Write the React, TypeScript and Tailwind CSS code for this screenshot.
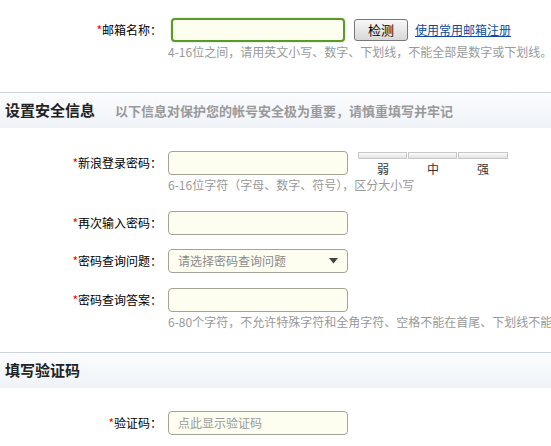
import React from "react";

const font = { fontFamily: '"Noto Sans CJK SC", "Liberation Sans", sans-serif' };

function Label({ text }: { text: string }) {
  return (
    <div className="w-[162px] shrink-0 text-right text-[12px] leading-[14px] text-black">
      <span className="text-[#ff0000]">*</span>
      {text}
    </div>
  );
}

function Input({ placeholder }: { placeholder?: string }) {
  return (
    <div className="ml-[6px] flex h-[24px] w-[180px] items-center rounded-[4px] border border-[#a3a39a] bg-[#fefef0] pl-[9px] text-[12px] text-[#9a9a9a]">
      {placeholder}
    </div>
  );
}

function Hint({ text }: { text: string }) {
  return (
    <div className="ml-[168px] mt-[3px] whitespace-nowrap text-[12px] leading-[14px] text-[#999]">{text}</div>
  );
}

function Header({ title, sub }: { title: string; sub?: string }) {
  return (
    <div className="flex h-[36px] items-center border-t border-[#cdd6de] bg-gradient-to-b from-[#fbfcfe] to-[#eff3f8] pl-[5px]">
      <span className="text-[15px] font-bold text-[#222]">{title}</span>
      {sub && <span className="ml-[20px] text-[13px] font-bold text-[#999]">{sub}</span>}
    </div>
  );
}

export default function App() {
  return (
    <div className="h-[446px] w-[551px] overflow-hidden bg-white" style={font}>
      <div className="flex h-[24px] items-center pt-0 mt-[18px]">
        <Label text="邮箱名称：" />
        <div className="ml-[9px] h-[24px] w-[174px] rounded-[4px] border-2 border-[#5a9a2a] bg-[#fefef0] shadow-[0_0_2px_#b5d99c]" />
        <button className="ml-[9px] flex h-[22px] w-[54px] items-center justify-center rounded-[3px] border border-[#777] bg-gradient-to-b from-[#f8f8f8] to-[#d8d8d8] text-[13px] text-black">
          检测
        </button>
        <a className="ml-[7px] whitespace-nowrap text-[12px] text-[#0d4a9c] underline">使用常用邮箱注册</a>
      </div>
      <Hint text="4-16位之间，请用英文小写、数字、下划线，不能全部是数字或下划线。" />

      <div className="mt-[33px]">
        <Header title="设置安全信息" sub="以下信息对保护您的帐号安全极为重要，请慎重填写并牢记" />
      </div>

      <div className="mt-[23px] flex h-[24px] items-start">
        <div className="flex h-[24px] items-center">
          <Label text="新浪登录密码：" />
          <Input />
        </div>
        <div className="ml-[10px] mt-[1px] flex w-[151px] flex-col">
          <div className="flex gap-[1px]">
            <div className="h-[7px] w-[49px] border border-[#c8c8c8] bg-gradient-to-b from-[#fbfbfb] to-[#e2e2e2]" />
            <div className="h-[7px] w-[49px] border border-[#c8c8c8] bg-gradient-to-b from-[#fbfbfb] to-[#e2e2e2]" />
            <div className="h-[7px] w-[50px] border border-[#c8c8c8] bg-gradient-to-b from-[#fbfbfb] to-[#e2e2e2]" />
          </div>
          <div className="mt-[3px] flex text-[12px] leading-[14px] text-[#333]">
            <span className="w-[50px] text-center">弱</span>
            <span className="w-[50px] text-center">中</span>
            <span className="w-[50px] text-center">强</span>
          </div>
        </div>
      </div>
      <Hint text="6-16位字符（字母、数字、符号），区分大小写" />

      <div className="mt-[19px] flex h-[24px] items-center">
        <Label text="再次输入密码：" />
        <Input />
      </div>

      <div className="mt-[14px] flex h-[24px] items-center">
        <Label text="密码查询问题：" />
        <div className="ml-[6px] flex h-[24px] w-[180px] items-center justify-between rounded-[4px] border border-[#a3a39a] bg-[#fefef0] pl-[9px] pr-[9px] text-[12px] text-[#8a8a8a]">
          <span>请选择密码查询问题</span>
          <svg width="9" height="6" viewBox="0 0 9 6">
            <path d="M0 0 H9 L4.5 5.5 Z" fill="#444" />
          </svg>
        </div>
      </div>

      <div className="mt-[15px] flex h-[24px] items-center">
        <Label text="密码查询答案：" />
        <Input />
      </div>
      <Hint text="6-80个字符，不允许特殊字符和全角字符、空格不能在首尾、下划线不能在最后" />

      <div className="mt-[23px]">
        <Header title="填写验证码" />
      </div>

      <div className="mt-[23px] flex h-[24px] items-center">
        <Label text="验证码：" />
        <Input placeholder="点此显示验证码" />
      </div>
    </div>
  );
}
